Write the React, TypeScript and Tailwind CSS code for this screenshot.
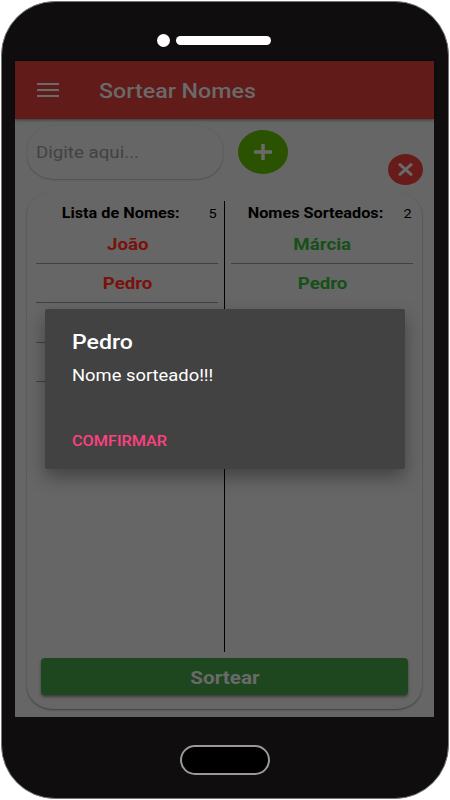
import { useState } from "react";
import type { ReactNode } from "react";
import clsx from "clsx";

const names = ["João", "Pedro", "", ""];
const drawn = ["Márcia", "Pedro"];

function Wide({ children, className = "scale-x-[1.12]" }: { children: ReactNode; className?: string }) {
  return <span className={clsx("inline-block whitespace-nowrap", className)}>{children}</span>;
}

function TopBar() {
  return (
    <header className="relative z-10 flex h-[58px] shrink-0 items-center bg-[#611b18] pl-[22px] text-[#6a6a6a] shadow-[0_1px_3px_rgba(0,0,0,0.45)]">
      <button aria-label="Menu" className="flex w-[22px] flex-col gap-1">
        <span className="h-0.5 bg-[#6a6a6a]" />
        <span className="h-0.5 bg-[#6a6a6a]" />
        <span className="h-0.5 bg-[#6a6a6a]" />
      </button>
      <h1 className="ml-10 pt-[3px] text-[21px] font-medium">
        <Wide className="origin-left scale-x-[1.105]">Sortear Nomes</Wide>
      </h1>
    </header>
  );
}

function NameForm() {
  return (
    <div className="flex h-[73px] shrink-0 pl-3 pt-[7px]">
      <div className="flex h-[53px] w-[196px] items-center rounded-[26px/24px] pl-[9px] pt-px text-[17px] text-[#424242] shadow-[0_0.5px_1.5px_rgba(0,0,0,0.35)]">
        <Wide className="origin-left scale-x-[1.1]">Digite aqui...</Wide>
      </div>
      <button
        aria-label="Adicionar"
        className="ml-[15px] mt-1 flex h-11 w-[50px] items-center justify-center rounded-[50%] bg-[#2a5200]"
      >
        <svg width="18" height="16" viewBox="0 0 18 16" stroke="#6a6a6a" strokeWidth="3.5">
          <path d="M0 8H18M9 0V16" />
        </svg>
      </button>
      <button
        aria-label="Limpar"
        className="ml-[100px] mt-7 flex h-[31px] w-[35px] items-center justify-center rounded-[50%] bg-[#681c19]"
      >
        <svg width="15" height="13" viewBox="0 0 15 13" stroke="#6a6a6a" strokeWidth="3" strokeLinecap="round">
          <path d="M2 1.7L13 11.3M13 1.7L2 11.3" />
        </svg>
      </button>
    </div>
  );
}

interface NameColumnProps {
  title: string;
  count: number;
  items: string[];
  color: string;
  lastLine?: boolean;
}

function NameColumn({ title, count, items, color, lastLine }: NameColumnProps) {
  return (
    <section className="flex-1">
      <div className="relative flex h-[23px] items-center justify-center pt-0.5 text-[14.5px] font-bold text-black">
        <h2 className="-ml-3">
          <Wide>{title}</Wide>
        </h2>
        <span className="absolute right-[2px] text-[13px] font-normal">
          <Wide>{count}</Wide>
        </span>
      </div>
      <ul className={clsx("text-[17px] font-bold", color)}>
        {items.map((name, i) => (
          <li
            key={i}
            className={clsx(
              "flex h-[39.6px] items-center justify-center border-b pl-px pt-[2px]",
              lastLine || i < items.length - 1 ? "border-[#3d4242]" : "border-transparent"
            )}
          >
            <Wide className="scale-x-[1.1]">{name}</Wide>
          </li>
        ))}
      </ul>
    </section>
  );
}

function NamesCard() {
  return (
    <div className="mx-3 mb-2 flex flex-1 flex-col rounded-[26px/23px] shadow-[0_1px_2px_rgba(0,0,0,0.4)]">
      <div className="mt-[9px] flex h-[451px]">
        <div className="flex flex-1 pl-[9px] pr-1.5">
          <NameColumn title="Lista de Nomes:" count={5} items={names} color="text-[#7a110d]" lastLine />
        </div>
        <div className="w-px bg-black" />
        <div className="flex flex-1 pl-1.5 pr-[9px]">
          <NameColumn title="Nomes Sorteados:" count={2} items={drawn} color="text-[#165019]" />
        </div>
      </div>
      <button className="mx-[14px] mt-1.5 h-[37px] rounded-sm bg-[#1e4720] pt-[4px] text-[18.5px] font-bold text-[#6a6a6a] shadow-[0_2px_3px_rgba(0,0,0,0.4)]">
        <Wide>Sortear</Wide>
      </button>
    </div>
  );
}

function Dialog({ name, onConfirm }: { name: string; onConfirm: () => void }) {
  return (
    <div className="absolute inset-0 z-20 flex items-center justify-center pl-px">
      <div className="flex h-40 w-[360px] flex-col items-start rounded-[2px] bg-[#424242] pl-[27px] pt-5 text-white shadow-[0_8px_18px_rgba(0,0,0,0.35)]">
        <h2 className="text-[21px] leading-[26px] font-medium">
          <Wide className="origin-left scale-x-[1.1]">{name}</Wide>
        </h2>
        <p className="mt-2 text-[17px] leading-6">
          <Wide className="origin-left scale-x-[1.08]">Nome sorteado!!!</Wide>
        </p>
        <button onClick={onConfirm} className="mt-[45px] text-[14.5px] leading-5 font-medium text-[#ff4081]">
          <Wide className="origin-left scale-x-[1.12]">COMFIRMAR</Wide>
        </button>
      </div>
    </div>
  );
}

export default function App() {
  const [open, setOpen] = useState(true);

  return (
    <div className="h-[800px] w-[450px] bg-white p-px font-['Roboto',sans-serif]">
      <div className="flex h-[798px] w-[448px] flex-col items-center rounded-[54px] border border-[#777] bg-[#0f0d0e]">
        <div className="-ml-[22px] flex h-[59px] shrink-0 items-center gap-1.5 pt-[17px]">
          <span className="h-[13px] w-[13px] rounded-full bg-white" />
          <span className="h-[9px] w-[95px] rounded-full bg-white" />
        </div>
        <div className="relative -ml-px flex h-[656px] w-[419px] shrink-0 flex-col bg-[#666]">
          <TopBar />
          <NameForm />
          <NamesCard />
          {open && <Dialog name="Pedro" onConfirm={() => setOpen(false)} />}
        </div>
        <div className="-ml-px mt-7 h-[30px] w-[90px] shrink-0 rounded-full border-2 border-[#999] bg-black" />
      </div>
    </div>
  );
}
